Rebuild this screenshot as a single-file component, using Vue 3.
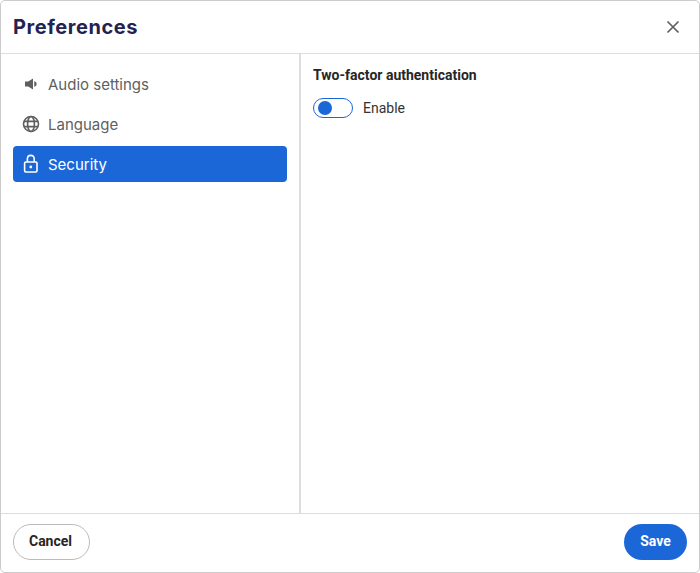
<template>
  <div class="modal">
    <header class="modal-header">
      <h1 class="modal-title">Preferences</h1>
      <button class="close-btn" aria-label="Close">
        <svg viewBox="0 0 14 14" width="14" height="14" fill="none">
          <path d="M1.5 1.5L12.5 12.5M12.5 1.5L1.5 12.5" stroke="#5f5f5f" stroke-width="1.7" />
        </svg>
      </button>
    </header>

    <div class="modal-body">
      <nav class="sidebar">
        <div class="nav-item">
          <svg class="nav-icon" viewBox="0 0 20 20" width="20" height="20">
            <path d="M4 7.5H7.2L12 4.6V15.4L7.2 12.5H4Z" fill="#5f5f5f" />
            <path d="M13.8 7.6C15.6 8.6 15.6 11.4 13.8 12.4Z" fill="#5f5f5f" stroke="#5f5f5f" stroke-width="1" />
          </svg>
          <span>Audio settings</span>
        </div>
        <div class="nav-item">
          <svg class="nav-icon" viewBox="0 0 20 20" width="20" height="20" fill="none" stroke="#5f5f5f" stroke-width="1.6">
            <circle cx="10" cy="10" r="7.5" />
            <ellipse cx="10" cy="10" rx="3.4" ry="7.5" />
            <path d="M3 7.4H17M3 12.6H17" />
          </svg>
          <span>Language</span>
        </div>
        <div class="nav-item active">
          <svg class="nav-icon" viewBox="0 0 20 20" width="20" height="20" fill="none" stroke="#fff" stroke-width="1.6">
            <rect x="3.6" y="8" width="12.4" height="10" rx="1.2" />
            <path d="M6.4 8V4.8C6.4 0.2 13.2 0.2 13.2 4.8V8" />
            <circle cx="9.8" cy="13" r="1.4" fill="#fff" stroke="none" />
          </svg>
          <span>Security</span>
        </div>
      </nav>

      <section class="content">
        <h2 class="content-title">Two-factor authentication</h2>
        <div class="toggle-row">
          <span class="toggle"><span class="toggle-knob"></span></span>
          <span class="toggle-label">Enable</span>
        </div>
      </section>
    </div>

    <footer class="modal-footer">
      <button class="btn btn-cancel">Cancel</button>
      <button class="btn btn-save">Save</button>
    </footer>
  </div>
</template>

<script setup>
</script>

<style>
html, body {
  margin: 0;
  background: #fff;
}
</style>

<style scoped>
.modal {
  box-sizing: border-box;
  width: 700px;
  height: 573px;
  display: flex;
  flex-direction: column;
  background: #fff;
  border: 1px solid #ccc;
  border-radius: 5px;
  font-family: Roboto, "Liberation Sans", sans-serif;
  overflow: hidden;
}

.modal-header {
  box-sizing: border-box;
  height: 53px;
  flex: none;
  display: flex;
  align-items: center;
  justify-content: space-between;
  padding: 0 19px 0 12px;
  border-bottom: 1px solid #ddd;
}

.modal-title {
  margin: 0;
  font-family: Inter, "Noto Sans", sans-serif;
  font-size: 20px;
  font-weight: 700;
  letter-spacing: 0.55px;
  color: #222352;
}

.close-btn {
  display: flex;
  padding: 0;
  border: none;
  background: none;
}

.modal-body {
  flex: 1;
  display: flex;
  min-height: 0;
}

.sidebar {
  box-sizing: border-box;
  width: 300px;
  flex: none;
  display: flex;
  flex-direction: column;
  gap: 4px;
  padding: 12px 12px 0;
  border-right: 2px solid #ddd;
}

.nav-item {
  height: 36px;
  display: flex;
  align-items: center;
  gap: 7px;
  padding: 0 8px;
  border-radius: 4px;
  font-family: Inter, "Noto Sans", sans-serif;
  font-size: 15px;
  color: #5f5f5f;
}

.nav-item.active {
  background: #1b67d8;
  color: #fff;
}

.nav-icon {
  flex: none;
}

.content {
  flex: 1;
  padding: 11px 12px;
}

.content-title {
  margin: 0 0 13px;
  font-size: 14px;
  line-height: 20px;
  font-weight: 700;
  color: #262626;
}

.toggle-row {
  display: flex;
  align-items: center;
  gap: 10px;
}

.toggle {
  box-sizing: border-box;
  width: 40px;
  height: 20px;
  display: flex;
  align-items: center;
  padding-left: 4px;
  border: 1px solid #1b67d8;
  border-radius: 10px;
}

.toggle-knob {
  width: 14px;
  height: 14px;
  border-radius: 50%;
  background: #1b67d8;
}

.toggle-label {
  font-size: 14px;
  color: #333;
}

.modal-footer {
  box-sizing: border-box;
  height: 59px;
  flex: none;
  display: flex;
  align-items: center;
  justify-content: space-between;
  padding: 0 12px 2px;
  border-top: 1px solid #ddd;
}

.btn {
  box-sizing: border-box;
  height: 36px;
  padding: 0 0 3px;
  border-radius: 18px;
  font-family: Roboto, "Liberation Sans", sans-serif;
  font-size: 14px;
  font-weight: 700;
}

.btn-cancel {
  width: 77px;
  padding-right: 2px;
  background: #fff;
  border: 1px solid #bbb;
  color: #262626;
}

.btn-save {
  width: 63px;
  background: #1b67d8;
  border: none;
  color: #fff;
}
</style>
